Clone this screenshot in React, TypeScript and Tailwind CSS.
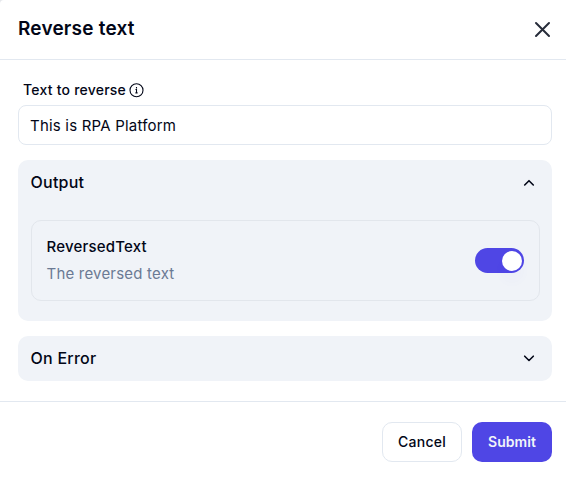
import React, { useState } from "react";

function Chevron({ up = false }: { up?: boolean }) {
  return (
    <svg width="16" height="16" viewBox="0 0 16 16" fill="none" stroke="#020617" strokeWidth="1.6" strokeLinecap="round" strokeLinejoin="round">
      <path d={up ? "M3.7 11 8 6.7l4.3 4.3" : "M3.7 6.2 8 10.5l4.3-4.3"} />
    </svg>
  );
}

export default function App() {
  const [enabled, setEnabled] = useState(true);
  return (
    <div className="h-[477px] w-[566px] overflow-hidden bg-[#e5e7eb]">
      <div className="flex h-full flex-col rounded-tl-[4px] bg-white font-['Inter',sans-serif] tracking-[0.2px] text-[#020617]">
        <header className="flex h-[60px] shrink-0 items-center justify-between border-b border-[#e2e8f0] pr-[15px] pl-[18px]">
          <h1 className="pb-px text-[19px] leading-7 font-semibold">Reverse text</h1>
          <button aria-label="Close">
            <svg width="17" height="17" viewBox="0 0 17 17" fill="none" stroke="#272c3a" strokeWidth="2" strokeLinecap="round">
              <path d="m2 2 13 13M15 2 2 15" />
            </svg>
          </button>
        </header>
        <main className="flex h-[341px] shrink-0 flex-col pt-5 pr-[14px] pl-[18px]">
          <label className="flex h-5 items-center gap-[3px] pl-[5px] text-sm font-medium tracking-[0.23px]">
            Text to reverse
            <svg width="15" height="15" viewBox="0 0 15 15" fill="none" stroke="#020617" strokeWidth="1.1">
              <circle cx="7.5" cy="7.2" r="6.5" />
              <path d="M6.5 6.5h1v3.3M6.4 9.9h2.2M7.5 4.1v1.3" />
            </svg>
          </label>
          <input className="mt-[5px] h-10 shrink-0 rounded-lg border border-[#e2e8f0] px-[11px] text-[15px] tracking-[0.2px] outline-none" defaultValue="This is RPA Platform" />
          <section className="mt-[15px] h-[161px] shrink-0 rounded-[10px] bg-[#f0f3f8] px-3">
            <div className="flex h-[45px] items-center justify-between pr-[3px] pb-px pl-[0.5px] text-base font-medium tracking-[0.25px]">Output<Chevron up /></div>
            <div className="mt-[15px] ml-px flex h-[81px] items-center justify-between rounded-[10px] border border-[#e2e6ec] px-[15px]">
              <div className="-ml-[0.5px] pb-0.5">
                <div className="text-[15px] leading-[27px] font-medium">ReversedText</div>
                <div className="text-[15px] leading-[27px] text-[#6b7a94]">The reversed text</div>
              </div>
              <button role="switch" aria-checked={enabled} onClick={() => setEnabled(!enabled)} className="flex h-[25px] w-[49px] items-center justify-end rounded-full bg-[#4f46e5] p-0.5">
                <span className="size-5 rounded-full bg-white shadow-[0_10px_15px_-3px_rgb(79_70_229/0.06)]" />
              </button>
            </div>
          </section>
          <section className="mt-[15px] flex h-[45px] shrink-0 items-center justify-between rounded-[10px] bg-[#f0f3f8] pr-[15px] pb-px pl-[12.5px] text-base font-medium tracking-[0.25px]">On Error<Chevron /></section>
        </main>
        <footer className="flex h-[76px] items-start justify-end gap-2.5 border-t border-[#e2e8f0] pt-5 pr-[14px]">
          <button className="h-10 w-20 rounded-[10px] border border-[#e2e8f0] text-sm font-medium tracking-[0.22px]">Cancel</button>
          <button className="h-10 w-20 rounded-[10px] bg-[#4f46e5] text-sm font-semibold tracking-[0.05px] text-[#f1f5f9]">Submit</button>
        </footer>
      </div>
    </div>
  );
}
